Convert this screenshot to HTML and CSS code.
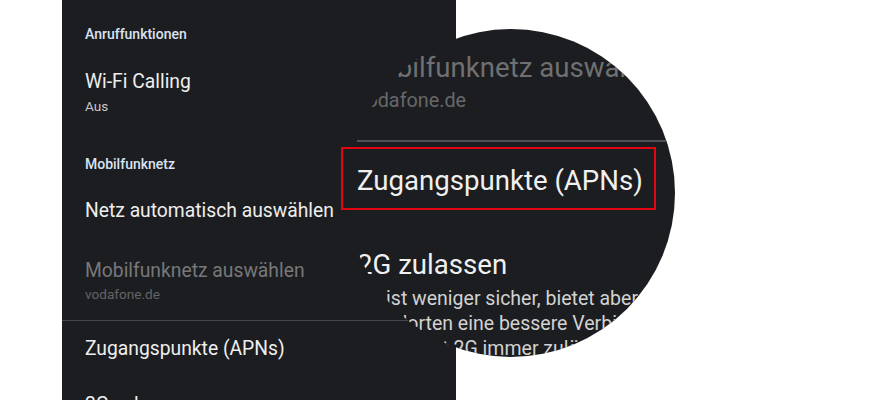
FILE: index.html
```html
<!DOCTYPE html>
<html lang="de">
<head>
<meta charset="utf-8">
<title>Zugangspunkte (APNs)</title>
<link rel="stylesheet" href="styles.css">
</head>
<body>
<div class="stage">
  <section class="panel">
    <div class="hdr hdr-calls">Anruffunktionen</div>
    <div class="item item-wifi">
      <div class="title">Wi-Fi Calling</div>
      <div class="sub sub-aus">Aus</div>
    </div>
    <div class="hdr hdr-net">Mobilfunknetz</div>
    <div class="item item-auto">
      <div class="title">Netz automatisch auswählen</div>
    </div>
    <div class="item item-select">
      <div class="title title-dim">Mobilfunknetz auswählen</div>
      <div class="sub sub-dim">vodafone.de</div>
    </div>
    <div class="divider"></div>
    <div class="item item-apn">
      <div class="title">Zugangspunkte (APNs)</div>
    </div>
    <div class="item item-2g">
      <div class="title">2G zulassen</div>
    </div>
  </section>
</div>

<div class="magnifier">
  <div class="mag-content">
    <div class="m-title m-dim">Mobilfunknetz auswählen</div>
    <div class="m-sub">vodafone.de</div>
    <div class="m-divider"></div>
    <div class="m-title m-apn">Zugangspunkte (APNs)</div>
    <div class="m-title m-2g">2G zulassen</div>
    <div class="m-desc">2G ist weniger sicher, bietet aber an manchen<br>Standorten eine bessere Verbindung. Für<br>Notrufe ist 2G immer zulässig.</div>
  </div>
</div>

<div class="highlight"></div>
</body>
</html>
```

FILE: styles.css
```css
html, body {
  margin: 0;
  padding: 0;
  background: #ffffff;
}

body {
  width: 879px;
  height: 400px;
  overflow: hidden;
  position: relative;
  font-family: Roboto, "Liberation Sans", Arial, sans-serif;
}

.stage {
  display: flex;
  padding-left: 62px;
  height: 400px;
}

.panel {
  width: 394px;
  height: 400px;
  box-sizing: border-box;
  padding: 24px 0 0 23px;
  background: #1c1d20;
  overflow: hidden;
  white-space: nowrap;
}

.hdr {
  font-size: 14px;
  font-weight: 500;
  line-height: 20px;
  color: #d9e3f2;
}

.hdr-net { margin-top: 38px; }

.title {
  font-size: 19.3px;
  line-height: 26px;
  color: #eeeeee;
}

.title-dim { color: #77787a; }

.sub {
  font-size: 13.6px;
  line-height: 20px;
  color: #c6c6c6;
}

.sub-aus { margin-top: 1px; }
.sub-dim { color: #636467; }

.item-wifi { margin-top: 25px; }
.item-auto { margin-top: 24px; }
.item-select { margin-top: 34px; }
.item-apn { margin-top: 15px; }
.item-2g { margin-top: 30px; }

.divider {
  margin: 16px 0 0 -23px;
  height: 1px;
  background: #46474a;
}

.magnifier {
  position: absolute;
  left: 347px;
  top: 29px;
  width: 328px;
  height: 328px;
  border-radius: 50%;
  overflow: hidden;
  background: #1c1d20;
}

.mag-content {
  padding: 22px 0 0 10px;
  white-space: nowrap;
}

.m-title {
  font-size: 27.6px;
  line-height: 34px;
  color: #f0f0f0;
}

.m-dim { color: #6f7072; }

.m-sub {
  margin-top: 3px;
  font-size: 19.8px;
  line-height: 26px;
  color: #67686a;
}

.m-divider {
  margin-top: 26px;
  height: 2px;
  background: #505154;
}

.m-apn { margin-top: 22px; }
.m-2g { margin-top: 50px; }

.m-desc {
  margin-top: 4px;
  font-size: 19.5px;
  line-height: 25px;
  color: #d2d2d2;
}

.highlight {
  position: absolute;
  left: 341px;
  top: 147px;
  width: 315px;
  height: 63px;
  box-sizing: border-box;
  border: 2px solid #e3050f;
}
```
